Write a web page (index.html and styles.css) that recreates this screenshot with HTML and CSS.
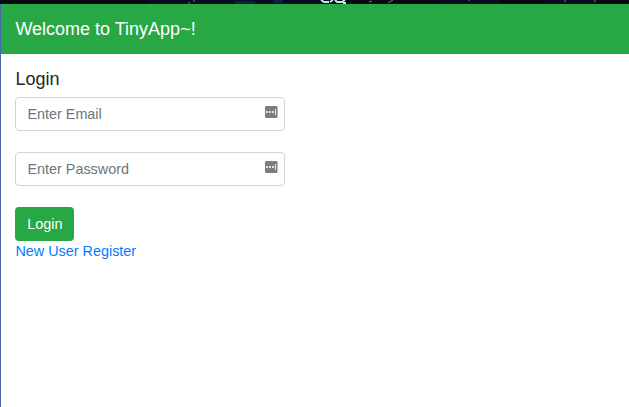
FILE: index.html
```html
<!DOCTYPE html>
<html lang="en">
<head>
<meta charset="utf-8">
<title>TinyApp</title>
<link rel="stylesheet" href="styles.css">
</head>
<body>
<svg class="backdrop" width="629" height="4" aria-hidden="true">
  <rect width="629" height="4" fill="#050914"/>
  <path d="M150 0h180v4H150zM440 0h60v4h-60zM545 0h50v4h-50z" fill="#070e20"/>
  <path d="M235 1h20v3h-20zM273 0h10v3h-10z" fill="#0f1f40"/>
  <path d="M321 0l3 2h5M330 2l3-2M335 0l2 2h5l3-2M343 3h3" stroke="#c5e6ea" stroke-width="1.9" fill="none"/>
  <path d="M194 0v2M188 3h2M369 2l3-1M388 3l5-3M565 0v2M595 0v2M469 0v1" stroke="#697c8c" fill="none"/>
</svg>
<div class="window">
  <nav class="navbar"><span class="brand">Welcome to TinyApp~!</span></nav>
  <main class="content">
    <h1 class="heading">Login</h1>
    <form class="form">
      <div class="field">
        <input class="input" type="email" placeholder="Enter Email" aria-label="Email">
        <svg class="key" width="13" height="13" viewBox="0 0 13 13"><rect width="12.5" height="12" rx="1.2" fill="#7d7d7d"/><path d="M1 5h2v2h-2zM4 5h2v2h-2zM7 5h2v2h-2zM10 3h1v6h-1z" fill="#e4e4e4"/></svg>
      </div>
      <div class="field">
        <input class="input" type="password" placeholder="Enter Password" aria-label="Password">
        <svg class="key" width="13" height="13" viewBox="0 0 13 13"><rect width="12.5" height="12" rx="1.2" fill="#7d7d7d"/><path d="M1 5h2v2h-2zM4 5h2v2h-2zM7 5h2v2h-2zM10 3h1v6h-1z" fill="#e4e4e4"/></svg>
      </div>
      <button class="button" type="button">Login</button>
    </form>
    <a class="link" href="#">New User Register</a>
  </main>
</div>
</body>
</html>
```

FILE: styles.css
```css
* { box-sizing: border-box; }
body {
  margin: 0;
  background: #fff;
  color: #212529;
  font: 14.4px/21.6px "Liberation Sans", Arial, sans-serif;
  overflow: hidden;
}
.backdrop { display: block; }
.window {
  height: 403px;
  border-left: 1px solid #4967ad;
}
.navbar {
  display: flex;
  align-items: center;
  height: 50px;
  padding: 0 14.4px;
  background: #28a745;
}
.brand { color: #fff; font-size: 18px; line-height: 27px; }
.content { padding: 14px 14px 0; }
.heading {
  margin: 0 0 7px;
  padding-left: 0.4px;
  font-size: 18px;
  font-weight: 400;
  line-height: 22px;
}
.form {
  display: flex;
  flex-direction: column;
  align-items: flex-start;
  gap: 21px;
}
.field { position: relative; width: 270px; height: 34px; }
.input {
  display: block;
  width: 100%;
  height: 34px;
  padding: 0 11.4px;
  border: 1px solid #ced4da;
  border-radius: 4px;
  background: #fff;
  color: #495057;
  font: inherit;
}
.input::placeholder { color: #6c757d; opacity: 1; }
.key { position: absolute; top: 9px; right: 7px; }
.button {
  width: 59px;
  height: 34px;
  padding: 1px 0 0 0.6px;
  border: 0;
  border-radius: 4px;
  background: #28a745;
  color: #fff;
  font: inherit;
}
.link {
  display: block;
  padding-left: 0.4px;
  color: #007bff;
  line-height: 21px;
  text-decoration: none;
}
```
